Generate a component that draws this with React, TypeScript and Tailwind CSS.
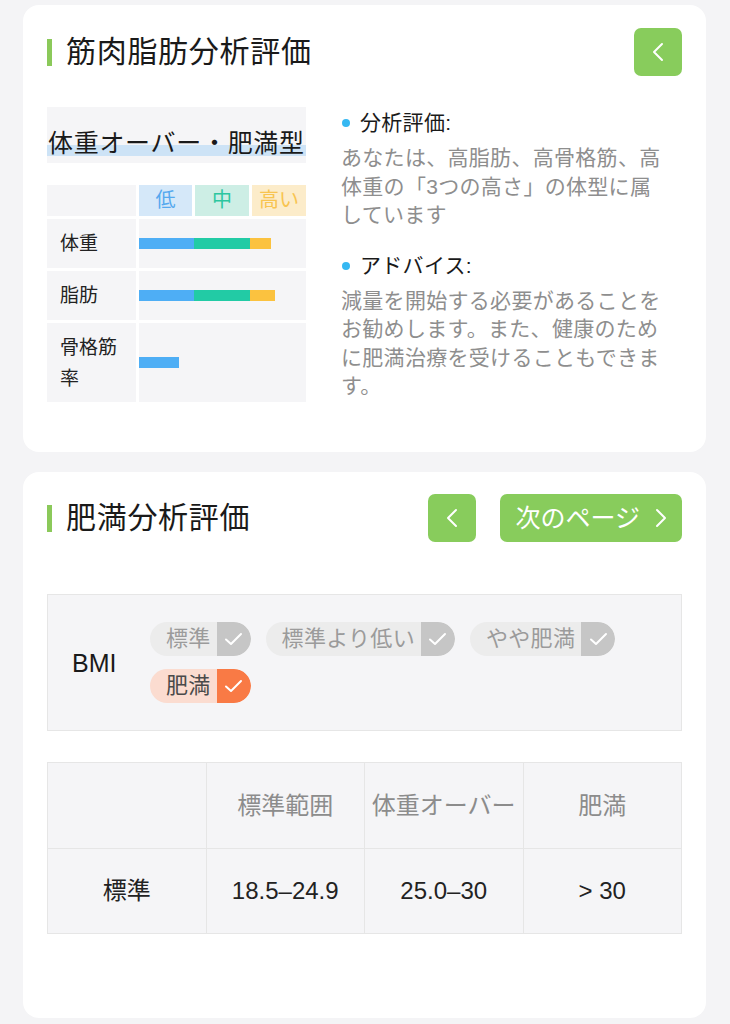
import { ReactNode } from "react";

const font = "font-['Liberation_Sans','Noto_Sans_CJK_JP',sans-serif]";

function Chevron(props: { dir: "left" | "right" }) {
  return (
    <svg width="12" height="20" viewBox="0 0 12 20" fill="none">
      <path
        d={props.dir === "left" ? "M10 2 L2 10 L10 18" : "M2 2 L10 10 L2 18"}
        stroke="white"
        strokeWidth="2"
        strokeLinecap="round"
        strokeLinejoin="round"
      />
    </svg>
  );
}

function Title(props: { children: ReactNode }) {
  return (
    <div className="flex items-center">
      <div className="w-[5px] h-[27px] bg-[#8bc95a]" />
      <h2 className="ml-[14px] text-[30px] leading-[36px] tracking-[0.7px] text-[#1a1a1a]">
        {props.children}
      </h2>
    </div>
  );
}

function GreenButton(props: { children: ReactNode; wide?: boolean }) {
  return (
    <button
      className={
        props.wide
          ? "h-[48px] rounded-[7px] bg-[#88cc5c] flex items-center pl-[15px] pr-[15px] gap-[15px]"
          : "h-[48px] w-[48px] rounded-[7px] bg-[#88cc5c] flex items-center justify-center"
      }
    >
      {props.children}
    </button>
  );
}

function Chip(props: { label: string; on?: boolean }) {
  return (
    <div
      className={
        props.on
          ? "h-[34px] flex items-center rounded-full bg-[#fbdcd0] overflow-hidden"
          : "h-[34px] flex items-center rounded-full bg-[#ececec] overflow-hidden"
      }
    >
      <span
        className={
          props.on
            ? "pl-[16px] pr-[6px] text-[22px] leading-[34px] tracking-[0.3px] text-[#4a4a4a]"
            : "pl-[16px] pr-[6px] text-[22px] leading-[34px] tracking-[0.3px] text-[#9b9b9b]"
        }
      >
        {props.label}
      </span>
      <span
        className={
          props.on
            ? "w-[34px] h-[34px] flex items-center justify-center bg-[#f97a45] rounded-r-full"
            : "w-[34px] h-[34px] flex items-center justify-center bg-[#c6c6c6] rounded-r-full"
        }
      >
        <svg width="19" height="14" viewBox="0 0 19 14" fill="none">
          <path
            d="M2 7.5 L7 12 L17 2"
            stroke="white"
            strokeWidth="2"
            strokeLinecap="round"
            strokeLinejoin="round"
          />
        </svg>
      </span>
    </div>
  );
}

function Bar(props: { blue: number; green?: number; yellow?: number }) {
  return (
    <div className="flex h-[11px]">
      <div className="bg-[#4eaef5]" style={{ width: props.blue }} />
      {props.green ? <div className="bg-[#22cba5]" style={{ width: props.green }} /> : null}
      {props.yellow ? <div className="bg-[#fbc23f]" style={{ width: props.yellow }} /> : null}
    </div>
  );
}

export default function App() {
  return (
    <div className={`${font} min-h-[1024px] bg-[#f4f4f6] pl-[23px] pr-[24px] pt-[5px]`}>
      {/* card 1 */}
      <div className="bg-white rounded-[16px] pt-[23px] px-[24px] pb-[50px]">
        <div className="flex items-center justify-between">
          <Title>筋肉脂肪分析評価</Title>
          <GreenButton>
            <Chevron dir="left" />
          </GreenButton>
        </div>

        <div className="mt-[31px] flex">
          <div className="w-[259px] shrink-0">
            <div className="h-[56px] bg-[#f5f5f7] pt-[24px]">
              <span className="block text-[25px] leading-[25px] tracking-[0.7px] pl-[1px] text-[#1a1a1a] bg-[linear-gradient(transparent_56%,#cde3f6_56%)]">
                体重オーバー・肥満型
              </span>
            </div>

            <div className="mt-[22px] grid grid-cols-[89px_53px_54px_54px] gap-[3px] text-[19px]">
              <div className="h-[31px] bg-[#f5f5f7]" />
              <div className="h-[31px] bg-[#d5e8f9] text-[#56a9ef] text-[20px] leading-[31px] text-center">低</div>
              <div className="h-[31px] bg-[#cdeee5] text-[#2cc69f] text-[20px] leading-[31px] text-center">中</div>
              <div className="h-[31px] bg-[#fcecca] text-[#f8c451] text-[20px] leading-[31px] text-center">高い</div>

              <div className="h-[49px] bg-[#f5f5f7] pl-[13px] flex items-center text-[#222] leading-[30px]">体重</div>
              <div className="col-span-3 h-[49px] bg-[#f5f5f7] flex items-center">
                <Bar blue={55} green={56} yellow={21} />
              </div>

              <div className="h-[49px] bg-[#f5f5f7] pl-[13px] flex items-center text-[#222] leading-[30px]">脂肪</div>
              <div className="col-span-3 h-[49px] bg-[#f5f5f7] flex items-center">
                <Bar blue={55} green={56} yellow={25} />
              </div>

              <div className="h-[79px] bg-[#f5f5f7] pl-[13px] pr-[12px] flex items-center text-[#222] leading-[31px]">骨格筋率</div>
              <div className="col-span-3 h-[79px] bg-[#f5f5f7] flex items-center">
                <Bar blue={40} />
              </div>
            </div>
          </div>

          <div className="ml-[35px] flex-1 pt-[2px]">
            <div className="flex items-center h-[28px]">
              <span className="w-[8px] h-[8px] rounded-full bg-[#36b8f2] ml-[1px]" />
              <span className="ml-[10px] text-[21px] leading-[28px] tracking-[0.3px] text-[#1a1a1a]">分析評価:</span>
            </div>
            <p className="mt-[7px] text-[21px] leading-[28.5px] tracking-[0.3px] text-[#8e8e8e]">
              あなたは、高脂肪、高骨格筋、高
              <br />
              体重の「3つの高さ」の体型に属
              <br />
              しています
            </p>

            <div className="mt-[22px] flex items-center h-[28px]">
              <span className="w-[8px] h-[8px] rounded-full bg-[#36b8f2] ml-[1px]" />
              <span className="ml-[10px] text-[21px] leading-[28px] tracking-[0.3px] text-[#1a1a1a]">アドバイス:</span>
            </div>
            <p className="mt-[7px] text-[21px] leading-[28.5px] tracking-[0.3px] text-[#8e8e8e]">
              減量を開始する必要があることを
              <br />
              お勧めします。また、健康のため
              <br />
              に肥満治療を受けることもできま
              <br />
              す。
            </p>
          </div>
        </div>
      </div>

      {/* card 2 */}
      <div className="mt-[20px] bg-white rounded-[16px] pt-[22px] px-[24px] pb-[84px]">
        <div className="flex items-center justify-between">
          <Title>肥満分析評価</Title>
          <div className="flex gap-[24px]">
            <GreenButton>
              <Chevron dir="left" />
            </GreenButton>
            <GreenButton wide>
              <span className="text-white text-[25px] leading-[30px]">次のページ</span>
              <Chevron dir="right" />
            </GreenButton>
          </div>
        </div>

        <div className="mt-[52px] h-[137px] bg-[#f5f5f7] border border-[#e6e6e6] flex items-center">
          <div className="w-[102px] shrink-0 pl-[24px] text-[25px] leading-[30px] text-[#1a1a1a]">BMI</div>
          <div className="flex flex-wrap gap-x-[15px] gap-y-[13px] pr-[20px]">
            <Chip label="標準" />
            <Chip label="標準より低い" />
            <Chip label="やや肥満" />
            <Chip label="肥満" on />
          </div>
        </div>

        <div className="mt-[31px] grid grid-cols-4 border-l border-t border-[#e6e6e6] bg-[#f5f5f7] text-[24px] text-center">
          {["", "標準範囲", "体重オーバー", "肥満"].map((h, i) => (
            <div
              key={i}
              className="h-[86px] flex items-center justify-center border-r border-b border-[#e6e6e6] text-[#8c8c8c] leading-[30px] whitespace-nowrap"
            >
              {h}
            </div>
          ))}
          {["標準", "18.5–24.9", "25.0–30", "> 30"].map((v, i) => (
            <div
              key={i}
              className="h-[85px] flex items-center justify-center border-r border-b border-[#e6e6e6] text-[#222] leading-[30px]"
            >
              {v}
            </div>
          ))}
        </div>
      </div>
    </div>
  );
}
